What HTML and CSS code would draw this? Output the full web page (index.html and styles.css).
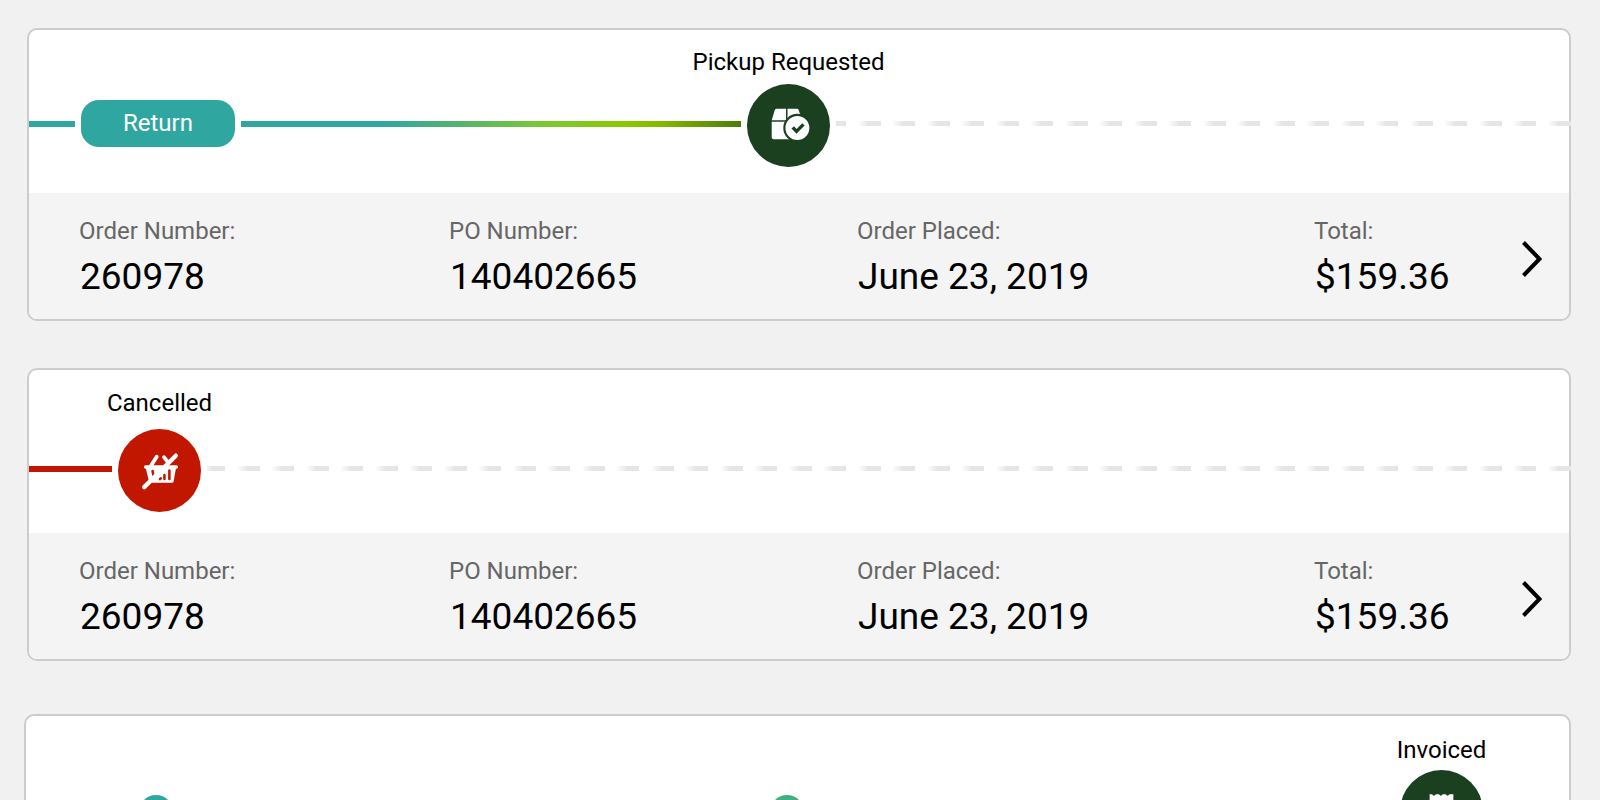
FILE: index.html
```html
<!DOCTYPE html>
<html lang="en">
<head>
<meta charset="utf-8">
<title>Orders</title>
<meta name="viewport" content="width=device-width, initial-scale=1">
<link rel="stylesheet" href="styles.css">
</head>
<body>
<main class="orders">
  <article class="card">
    <div class="track track-return">
      <span class="label label-pickup">Pickup Requested</span>
      <span class="line line-teal"></span>
      <span class="pill">Return</span>
      <span class="line line-progress"></span>
      <span class="node node-green">
        <svg class="node-icon" viewBox="0 0 84 84" aria-hidden="true">
          <path fill="#fff" d="M30 25h9.500v11.800H25l3-10.300Q28.500 25 30 25zM41 25h9.500q1.400 0 1.900 1.500l1.600 5H41zM41 30h13v6.800H41zM25 38.300h20V56H27q-2 0-2-2z"/>
          <circle cx="51" cy="44.500" r="13.200" fill="#fff" stroke="#1a4020" stroke-width="2.200"/>
          <path d="M46.300 43.900l3.800 4 7-7" fill="none" stroke="#1a4020" stroke-width="3.400"/>
        </svg>
      </span>
      <span class="dashes"></span>
    </div>
    <div class="info">
      <dl class="field"><dt>Order Number:</dt><dd>260978</dd></dl>
      <dl class="field"><dt>PO Number:</dt><dd>140402665</dd></dl>
      <dl class="field"><dt>Order Placed:</dt><dd>June 23, 2019</dd></dl>
      <dl class="field"><dt>Total:</dt><dd>$159.36</dd></dl>
      <a class="open" href="#order-return" aria-label="Open order"><svg viewBox="0 0 20 36" aria-hidden="true"><path d="M1.500 1.500L17.500 18 1.500 34.500" fill="none" stroke="#000" stroke-width="4"/></svg></a>
    </div>
  </article>

  <article class="card">
    <div class="track track-cancelled">
      <span class="label label-cancelled">Cancelled</span>
      <span class="line line-red"></span>
      <span class="node node-red">
        <svg class="node-icon" viewBox="0 0 84 84" aria-hidden="true">
          <g fill="none" stroke="#fff" stroke-linecap="round" stroke-linejoin="round">
            <path stroke-width="3.800" d="M33.500 37l5.700-9M50.500 33.500l-4-5"/>
            <path stroke-width="3.600" d="M28 38.500h31"/>
            <path fill="#fff" stroke-width="2" d="M29 39h28.800l-2.600 14.300H32.500z"/>
            <path stroke="#c11700" stroke-width="2.600" d="M35 42.500l1 5M42 43.500l-2 2.500M47 46.500v4M52 42v8.500"/>
            <path stroke="#c11700" stroke-width="2.600" d="M42.500 50.800l.8-.8"/>
            <path stroke-width="4.400" d="M26.500 58.800L58.500 27"/>
          </g>
        </svg>
      </span>
      <span class="dashes"></span>
    </div>
    <div class="info">
      <dl class="field"><dt>Order Number:</dt><dd>260978</dd></dl>
      <dl class="field"><dt>PO Number:</dt><dd>140402665</dd></dl>
      <dl class="field"><dt>Order Placed:</dt><dd>June 23, 2019</dd></dl>
      <dl class="field"><dt>Total:</dt><dd>$159.36</dd></dl>
      <a class="open" href="#order-cancelled" aria-label="Open order"><svg viewBox="0 0 20 36" aria-hidden="true"><path d="M1.500 1.500L17.500 18 1.500 34.500" fill="none" stroke="#000" stroke-width="4"/></svg></a>
    </div>
  </article>

  <article class="card card-wide">
    <div class="track track-invoiced">
      <span class="label label-invoiced">Invoiced</span>
      <span class="line line-teal"></span>
      <span class="dot dot-teal"></span>
      <span class="line line-teal"></span>
      <span class="dot dot-green"></span>
      <span class="line line-progress"></span>
      <span class="node node-green">
        <svg class="node-icon" viewBox="0 0 84 84" aria-hidden="true">
          <path fill="#fff" d="M30 24.500h2.500q1.500 3 4 0h3q1.800 3 3.800 0h3q1.800 3 3.800 0H54V60H30z"/>
        </svg>
      </span>
      <span class="line line-progress-end"></span>
    </div>
  </article>
</main>
</body>
</html>
```
FILE: styles.css
```css
* {
  box-sizing: border-box;
}

html {
  scrollbar-width: none;
}

body {
  margin: 0;
  background: #f1f1f1;
  color: #000;
  font-family: Roboto, "Liberation Sans", sans-serif;
  font-size: 24px;
  line-height: 28px;
}

.orders {
  display: flex;
  flex-direction: column;
  gap: 47px;
  padding: 28px 29px 0 27px;
}

.card {
  border: 2px solid #ccc;
  border-radius: 10px;
  background: #fff;
}

.card-wide {
  margin: 6px 0 0 -3px;
}

.track {
  display: grid;
  grid-template-rows: 28px 83px;
  column-gap: 6px;
  align-items: center;
  min-height: 163px;
  align-content: start;
}

.track-return {
  grid-template-columns: 46px 154px 500fr 83px 733fr;
  row-gap: 8px;
  padding-top: 18px;
}

.track-cancelled {
  grid-template-columns: 83px 83px 1fr;
  row-gap: 12px;
  padding-top: 19px;
}

.track-invoiced {
  grid-template-columns: 107px 34px 1fr 34px 1fr 83px 80px;
  row-gap: 6px;
  padding-top: 20px;
}

.label {
  grid-row: 1;
  justify-self: center;
  white-space: nowrap;
}

.label-pickup {
  grid-column: 4;
}

.label-cancelled {
  grid-column: 2;
}

.label-invoiced {
  grid-column: 6;
}

.line,
.pill,
.node,
.dot,
.dashes {
  grid-row: 2;
}

.line {
  height: 6px;
  margin-bottom: 3px;
}

.line-teal {
  background: #30a6a0;
}

.line-red {
  background: #c11700;
}

.line-progress {
  background: linear-gradient(to right, #30a6a0 0%, #30a6a0 28%, #54b46c 44%, #7ac834 60%, #8cc800 77%, #84b800 84%, #4c7c0c 100%);
}

.line-progress-end {
  background: #1a4020;
}

.pill {
  margin-bottom: 5px;
  padding: 9px 0 10px;
  border-radius: 18px;
  background: #30a6a0;
  color: #fff;
  text-align: center;
}

.node {
  width: 83px;
  height: 83px;
  border-radius: 50%;
}

.node-green {
  background: #1a4020;
}

.node-red {
  background: #c11700;
}

.node-icon {
  display: block;
  width: 100%;
  height: 100%;
}

.dot {
  width: 34px;
  height: 34px;
  border-radius: 50%;
}

.dot-teal {
  background: #30a6a0;
}

.dot-green {
  background: #43ae80;
}

.dashes {
  height: 5px;
  margin: 0 -2px 4px 0;
  background: linear-gradient(to right, transparent 16%, #e5e5e5 32%, #e5e5e5 50%, transparent 50%, transparent 66%, #e5e5e5 82%) right / 69px 100%;
}

.info {
  display: grid;
  grid-template-columns: 370fr 408fr 457fr 208fr 20px;
  padding: 24px 27px 20px 50px;
  border-radius: 0 0 8px 8px;
  background: #f4f4f4;
}

.field {
  display: flex;
  flex-direction: column;
  gap: 10px;
  margin: 0;
}

.field dt {
  color: #666;
}

.field dd {
  margin: 0 0 0 1px;
  font-size: 37px;
  line-height: 44px;
}

.open {
  align-self: center;
  margin-top: 2px;
}

.open svg {
  display: block;
  width: 20px;
  height: 36px;
}
```
